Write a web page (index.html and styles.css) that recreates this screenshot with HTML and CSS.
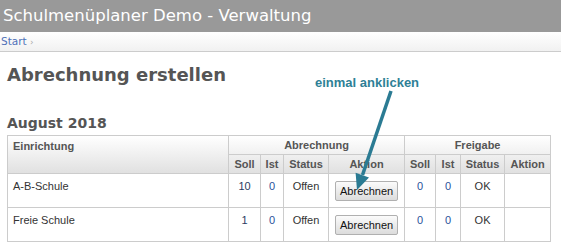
FILE: index.html
```html
<!DOCTYPE html>
<html lang="de">
<head>
<meta charset="utf-8">
<title>Schulmenüplaner Demo - Verwaltung</title>
<link rel="stylesheet" href="styles.css">
</head>
<body>
<header class="topbar">Schulmenüplaner Demo - Verwaltung</header>
<nav class="crumbs"><a href="#" class="crumb-link">Start</a> <span class="crumb-sep">›</span></nav>
<main class="content">
  <h1 class="page-title">Abrechnung erstellen</h1>
  <h2 class="month">August 2018</h2>
  <table class="grid">
    <colgroup>
      <col class="c-name"><col class="c-soll"><col class="c-ist"><col class="c-status"><col class="c-aktion">
      <col class="c-soll2"><col class="c-ist2"><col class="c-status2"><col class="c-aktion2">
    </colgroup>
    <thead>
      <tr class="h1row">
        <th rowspan="2" class="th-name">Einrichtung</th>
        <th colspan="4">Abrechnung</th>
        <th colspan="4">Freigabe</th>
      </tr>
      <tr class="h2row">
        <th>Soll</th><th>Ist</th><th>Status</th><th>Aktion</th>
        <th>Soll</th><th>Ist</th><th>Status</th><th>Aktion</th>
      </tr>
    </thead>
    <tbody>
      <tr>
        <td class="name">A-B-Schule</td>
        <td class="num soll">10</td><td class="num">0</td><td>Offen</td>
        <td><button class="btn">Abrechnen</button></td>
        <td class="num">0</td><td class="num">0</td><td>OK</td><td></td>
      </tr>
      <tr>
        <td class="name">Freie Schule</td>
        <td class="num soll">1</td><td class="num">0</td><td>Offen</td>
        <td><button class="btn">Abrechnen</button></td>
        <td class="num">0</td><td class="num">0</td><td>OK</td><td></td>
      </tr>
    </tbody>
  </table>
</main>
<svg class="annotation" width="561" height="243" viewBox="0 0 561 243">
  <text x="315" y="86.7" class="note">einmal anklicken</text>
  <line x1="391" y1="91" x2="362.5" y2="175" class="arrow-shaft"/>
  <polygon points="357,190 369,177.4 355.6,172.8" class="arrow-head"/>
</svg>
</body>
</html>
```
FILE: styles.css
```css
html, body {
  margin: 0;
  padding: 0;
  background: #fff;
}
body {
  position: relative;
  width: 561px;
  height: 243px;
  overflow: hidden;
  font-family: "DejaVu Sans", sans-serif;
}
.topbar {
  height: 32px;
  line-height: 31px;
  background: #999999;
  color: #fff;
  font-size: 16.5px;
  padding-left: 3px;
}
.crumbs {
  height: 19px;
  line-height: 18px;
  background: linear-gradient(#ffffff, #f1f1f1);
  border-bottom: 1px solid #cccccc;
  font-size: 10.5px;
  padding-left: 1px;
}
.crumb-link {
  color: #4f70b8;
  text-decoration: none;
}
.crumb-sep {
  color: #aaaaaa;
  font-size: 9px;
}
.content {
  padding-left: 7px;
}
.page-title {
  margin: 11px 0 0;
  font-size: 18px;
  line-height: 23px;
  font-weight: bold;
  color: #555555;
}
.month {
  margin: 28px 0 0;
  font-size: 14px;
  line-height: 18px;
  font-weight: bold;
  color: #555555;
}
.grid {
  margin-top: 3px;
  width: 544px;
  table-layout: fixed;
  border-collapse: collapse;
  font-family: "Liberation Sans", Arial, sans-serif;
  font-size: 11px;
  line-height: 13px;
}
.c-name { width: 221px; }
.c-soll { width: 32px; }
.c-ist { width: 23px; }
.c-status { width: 45px; }
.c-aktion { width: 76px; }
.c-soll2 { width: 31px; }
.c-ist2 { width: 25px; }
.c-status2 { width: 44px; }
.c-aktion2 { width: 46px; }
.grid thead {
  background: linear-gradient(#ffffff, #e0e0e0);
}
.grid th {
  border: 1px solid #cccccc;
  color: #555555;
  font-weight: bold;
  padding: 3px 4px 2px;
  text-align: center;
  vertical-align: middle;
  height: 12px;
}
.grid .th-name {
  text-align: left;
  vertical-align: top;
  padding: 4px 5px;
}
.h2row th {
  height: 13px;
}
.grid td {
  border: 1px solid #cccccc;
  padding: 6px 3px 0;
  height: 27px;
  vertical-align: top;
  text-align: center;
  color: #333333;
}
.grid td.name {
  text-align: left;
  padding-left: 5px;
}
.grid td.num {
  color: #2a519a;
}
.grid td.soll {
  color: #2b3b62;
}
.btn {
  margin-top: 1px;
  width: 63px;
  height: 20px;
  padding: 0 4px;
  font-family: "Liberation Sans", Arial, sans-serif;
  font-size: 11px;
  color: #111;
  background: linear-gradient(#fbfbfb, #dcdcdc);
  border: 1px solid #b0b0b0;
  border-radius: 2px;
}
.annotation {
  position: absolute;
  left: 0;
  top: 0;
  pointer-events: none;
}
.note {
  font-family: "Liberation Sans", Arial, sans-serif;
  font-weight: bold;
  font-size: 13px;
  fill: #2e8096;
}
.arrow-shaft {
  stroke: #2b7b93;
  stroke-width: 3.5;
}
.arrow-head {
  fill: #2b7b93;
}
```
